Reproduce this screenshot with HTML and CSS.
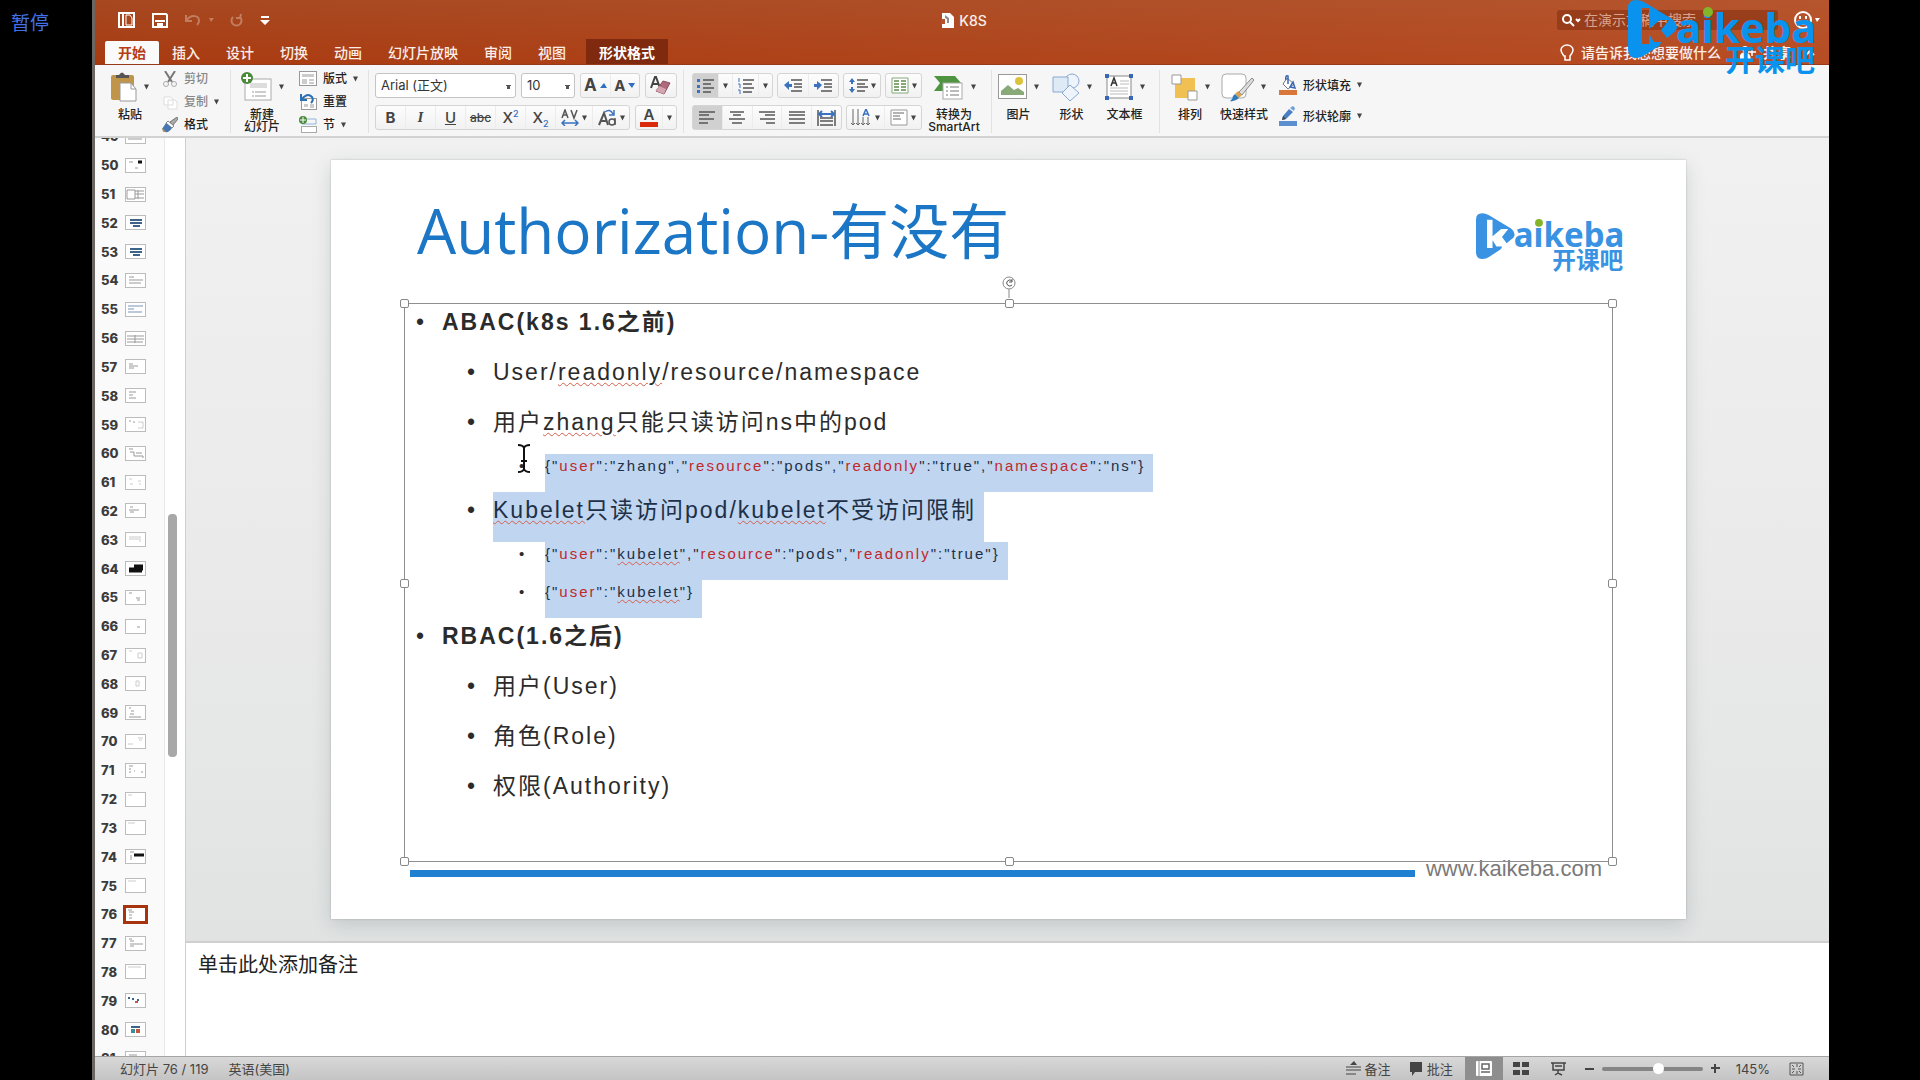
FILE: index.html
```
<!DOCTYPE html>
<html lang="zh-CN">
<head>
<meta charset="utf-8">
<title>K8S</title>
<link rel="stylesheet" href="styles.css">
</head>
<body>
<svg class="defs" aria-hidden="true">
  <defs>
    <symbol id="logo" viewBox="0 0 188 74">
      <path d="M0 8Q0 0 8 0Q12 0 16 2L44 19Q49 23 49 28Q48 31 45 33L39 38L33 30L41 20H32L21 29V8H14V44H21V34L26 42H33Q33 44 31 46L17 55Q13 58 8 58Q0 58 0 49Z"/>
      <text class="logo-latin" x="48" y="43">aikeba</text>
      <circle class="logo-dot" cx="80" cy="12" r="5"/>
      <text class="logo-cjk" x="97" y="71">开课吧</text>
    </symbol>
    <symbol id="car" viewBox="0 0 6 6"><path d="M0 0h6L3 6z"/></symbol>
  </defs>
</svg>
<aside class="gutter">暂停</aside>
<div class="app">
  <header class="titlebar">
    <div class="top-row">
      <div class="quick">
        <button aria-label="新建"><svg width="18" height="16" viewBox="0 0 18 16"><path d="M1 1h15v14H1z" fill="none" stroke="#fff" stroke-width="2"/><path d="M5 1v14" stroke="#fff" stroke-width="2"/><path d="M8 3h4l2 3v7H8z" fill="none" stroke="#fff"/></svg></button>
        <button aria-label="保存"><svg width="16" height="15" viewBox="0 0 16 15"><path d="M1 1h13l1 1v12H1z" fill="none" stroke="#fff" stroke-width="2"/><path d="M3 7h10v2H3zM5 10h6v5H5z" fill="#fff"/></svg></button>
        <button class="faded" aria-label="撤销"><svg width="30" height="14" viewBox="0 0 30 14"><path d="M2 2v6h6M2 8C7 1 15 2 15 8q0 2-2 4" fill="none" stroke="#fff" stroke-width="2"/><path d="M25 5h5l-3 4z" fill="#fff"/></svg></button>
        <button class="faded" aria-label="重做"><svg width="14" height="14" viewBox="0 0 14 14"><path d="M3 4a5 5 0 1 0 7 0M11 1l-1 4H6" fill="none" stroke="#fff" stroke-width="2"/></svg></button>
        <button aria-label="自定义工具栏"><svg width="10" height="9" viewBox="0 0 10 9"><path d="M1 0h8v2H1zM0 4h10L5 9z" fill="#fff"/></svg></button>
      </div>
      <h1 class="doc"><svg width="13" height="15" viewBox="0 0 13 15"><path d="M1 0h8l4 4v11H1z" fill="#fff"/><path d="M0 6h4v5H0z" fill="#b5512b"/><path d="M4 2l4 3v5H6V6L4 5z" fill="#8d8d8d"/></svg>K8S</h1>
      <div class="find">
        <label class="search"><svg width="19" height="13" viewBox="0 0 19 13"><circle cx="5" cy="5" r="4" fill="none" stroke="#fff" stroke-width="2"/><path d="M8 8l4 4M14 5l2 2 2-2" fill="none" stroke="#fff" stroke-width="2"/></svg><input type="text" aria-label="搜索" placeholder="在演示文稿中搜索"></label>
        <button aria-label="反馈"><svg width="26" height="18" viewBox="0 0 26 18"><circle cx="9" cy="9" r="8" fill="none" stroke="#fff" stroke-width="2"/><path d="M6 5v3M12 5v3M4 10q5 6 10 0" fill="none" stroke="#fff" stroke-width="2"/><path d="M21 7h5l-3 4z" fill="#fff"/></svg></button>
      </div>
    </div>
    <nav class="tabs">
      <a class="tab active" href="#home">开始</a><a class="tab" href="#insert">插入</a><a class="tab" href="#design">设计</a><a class="tab" href="#trans">切换</a><a class="tab" href="#anim">动画</a><a class="tab" href="#show">幻灯片放映</a><a class="tab" href="#review">审阅</a><a class="tab" href="#view">视图</a><a class="tab context" href="#format">形状格式</a>
      <div class="help">
        <a class="tell" href="#tell"><svg width="14" height="18" viewBox="0 0 14 18"><path d="M4 12Q1 8 1 6a6 5 0 0 1 12 0q0 2-3 6v4H5v-4z" fill="none" stroke="#fff" stroke-width="1.5"/></svg>请告诉我您想要做什么</a>
        <a class="share" href="#share"><svg width="16" height="14" viewBox="0 0 16 14"><circle cx="5" cy="3" r="3" fill="#fff"/><path d="M0 14q0-7 5-7t5 7zM12 2v8M8 6h8" fill="#fff" stroke="#fff" stroke-width="1.5"/></svg>共享</a>
        <button aria-label="折叠功能区"><svg width="9" height="6" viewBox="0 0 9 6"><path d="M0 5l4-4 4 4" fill="none" stroke="#fff" stroke-width="2"/></svg></button>
      </div>
    </nav>
    <svg class="watermark" role="img" aria-label="开课吧"><use href="#logo"/></svg>
  </header>

  <div class="ribbon">
    <button class="big w52"><span><svg width="26" height="30" viewBox="0 0 26 30"><rect y="3" width="23" height="25" rx="2" fill="#c0954a"/><path d="M5 6V3h3q3-5 6 0h4v3z" fill="#555"/><path d="M9 11h11l5 6v12H9z" fill="#fff" stroke="#999"/><path d="M20 11v6h5" fill="none" stroke="#999"/></svg><svg class="car"><use href="#car"/></svg></span>粘贴</button>
    <div class="stack w74">
      <button class="dim"><svg width="16" height="16" viewBox="0 0 16 16"><path d="M3 0l7 11M13 0L6 11" stroke="#777" stroke-width="2"/><circle cx="4" cy="13" r="2.500" fill="none" stroke="#aaa"/><circle cx="12" cy="13" r="2.500" fill="none" stroke="#aaa"/></svg>剪切</button>
      <button class="dim"><svg width="16" height="16" viewBox="0 0 16 16"><path d="M2 3h7l2 2v6H2zM6 6h7l2 2v7H6z" fill="#fff" stroke="#ddd"/></svg>复制<svg class="car"><use href="#car"/></svg></button>
      <button><svg width="16" height="16" viewBox="0 0 16 16"><path d="M15 0l1 2-5 6-3-3z" fill="#aaa" stroke="#777"/><path d="M6 4l6 5-2 2-6-5z" fill="#fff" stroke="#888"/><path d="M4 6l6 5q-3 5-7 4l-3-3z" fill="#4876b0"/><path d="M0 11l4 4h-3z" fill="#c89655"/></svg>格式</button>
    </div>
    <i class="rule"></i>
    <button class="big w62"><span><svg width="31" height="30" viewBox="0 0 31 30"><rect x="4" y="7" width="26" height="21" fill="#fff" stroke="#aaa"/><path d="M9 11h17v5H9z" fill="#ddd"/><path d="M11 20h14M11 24h14" stroke="#999" stroke-dasharray="2 1 20"/><circle cx="6" cy="6" r="6" fill="#4a8a3b"/><path d="M6 2v8M2 6h8" stroke="#fff" stroke-width="2"/></svg><svg class="car"><use href="#car"/></svg></span>新建<br>幻灯片</button>
    <div class="stack w75">
      <button><svg width="18" height="16" viewBox="0 0 18 16"><rect x=".5" y=".5" width="17" height="14" fill="#fff" stroke="#999"/><path d="M3 3h12v3H3zM3 8h5v5H3z" fill="#ccc"/><path d="M10 9h5M10 12h5" stroke="#999"/></svg>版式<svg class="car"><use href="#car"/></svg></button>
      <button><svg width="18" height="17" viewBox="0 0 18 17"><rect x="2.500" y="5.500" width="15" height="11" fill="#fff" stroke="#999"/><path d="M5 11h4v3H5z" fill="#ccc"/><path d="M11 12h4M11 14h4" stroke="#999"/><path d="M2 1v6h6M2 7Q8-1 13 4q2 3-1 6" fill="none" stroke="#2b6fb5" stroke-width="2"/></svg>重置</button>
      <button><svg width="18" height="17" viewBox="0 0 18 17"><path d="M8 3h9v5H3" fill="none" stroke="#8fb3dc"/><rect x="2.500" y="10.500" width="15" height="6" fill="#fff" stroke="#aaa"/><circle cx="4" cy="4" r="4" fill="#4a8a3b"/><path d="M4 1v6M1 4h6" stroke="#fff"/></svg>节<svg class="car"><use href="#car"/></svg></button>
    </div>
    <i class="rule"></i>
    <div class="block font-block">
      <div class="line">
        <select class="w141" aria-label="字体"><option>Arial (正文)</option></select>
        <select class="w54" aria-label="字号"><option>10</option></select>
        <div class="seg w60">
          <button aria-label="增大字号"><b class="lg">A</b><svg width="7" height="5" viewBox="0 0 7 5"><path d="M0 5h7L4 0z" fill="#2f6fc0"/></svg></button>
          <button aria-label="减小字号"><b>A</b><svg width="7" height="5" viewBox="0 0 7 5"><path d="M0 0h7L4 5z" fill="#2f6fc0"/></svg></button>
        </div>
        <div class="seg w32"><button aria-label="清除格式"><svg width="22" height="20" viewBox="0 0 22 20"><path d="M1 12L5 1h1l4 11M3 8h5" fill="none" stroke="#444" stroke-width="2"/><path d="M13 5l7 2-6 11-8-3z" fill="#b06a7c" stroke="#8b4f60"/><path d="M6 15l3-5 7 3-2 5z" fill="#d3a5b0"/></svg></button></div>
      </div>
      <div class="line">
        <div class="seg w255">
          <button><b>B</b></button><button><i class="it">I</i></button><button><u>U</u></button><button><s>abc</s></button><button><span>X<sup>2</sup></span></button><button><span>X<sub>2</sub></span></button>
          <button class="wide" aria-label="字符间距"><svg width="18" height="17" viewBox="0 0 18 17"><path d="M1 9l3-8 3 8M2 6h4M10 1l3 8 3-8" fill="none" stroke="#555" stroke-width="1.500"/><path d="M1 14h16M4 11l-3 3 3 3M14 11l3 3-3 3" fill="none" stroke="#3a72c0" stroke-width="1.500"/></svg><svg class="car"><use href="#car"/></svg></button>
          <button class="wide" aria-label="更改大小写"><svg width="19" height="17" viewBox="0 0 19 17"><path d="M1 16L6 4l4 12M3 12h6" fill="none" stroke="#555" stroke-width="2"/><circle cx="14" cy="13" r="3" fill="none" stroke="#555" stroke-width="1.500"/><path d="M17 9v7" stroke="#555" stroke-width="1.500"/><path d="M7 3q5-4 8 2M16 1v5h-5" fill="none" stroke="#3a72c0" stroke-width="1.500"/></svg><svg class="car"><use href="#car"/></svg></button>
        </div>
        <div class="seg w42"><button aria-label="字体颜色"><span class="fc">A</span></button><button class="slim" aria-label="更多颜色"><svg class="car"><use href="#car"/></svg></button></div>
      </div>
    </div>
    <i class="rule"></i>
    <div class="block para-block">
      <div class="line">
        <div class="seg w81">
          <button class="on" aria-label="项目符号"><svg width="17" height="16" viewBox="0 0 17 16"><path d="M6 2h11M6 6h8M6 10h11M6 14h8" stroke="#555" stroke-width="1.500"/><path d="M0 1h3v3H0zM0 7h3v3H0zM0 12h3v3H0z" fill="#3a72c0"/></svg></button><button class="slim" aria-label="更多项目符号"><svg class="car"><use href="#car"/></svg></button>
          <button aria-label="编号"><svg width="17" height="16" viewBox="0 0 17 16"><path d="M6 2h11M6 6h9M6 10h11M6 14h9" stroke="#555" stroke-width="1.500"/><path d="M2 0v4M1 6h2v4M1 12h2v4" fill="none" stroke="#3a72c0"/></svg></button><button class="slim" aria-label="更多编号"><svg class="car"><use href="#car"/></svg></button>
        </div>
        <div class="seg w62b">
          <button aria-label="减少缩进"><svg width="18" height="13" viewBox="0 0 18 13"><path d="M7 1h11M10 5h8M10 8h8M7 12h11" stroke="#555" stroke-width="1.500"/><path d="M5 2v3h3v3H5v3L0 6z" fill="#3a72c0"/></svg></button>
          <button aria-label="增加缩进"><svg width="18" height="13" viewBox="0 0 18 13"><path d="M7 1h11M10 5h8M10 8h8M7 12h11" stroke="#555" stroke-width="1.500"/><path d="M3 2v3H0v3h3v3l5-5z" fill="#3a72c0"/></svg></button>
        </div>
        <div class="seg w38"><button aria-label="行距"><svg width="19" height="15" viewBox="0 0 19 15"><path d="M8 2h11M8 6h8M8 9h11M8 13h8" stroke="#555" stroke-width="1.500"/><path d="M3 0l3 4H4v2H2V4H0zM3 15l3-4H4V9H2v2H0z" fill="#3a72c0"/></svg><svg class="car"><use href="#car"/></svg></button></div>
        <div class="seg w37"><button aria-label="分栏"><svg width="18" height="17" viewBox="0 0 18 17"><path d="M1 1h16v15H1z" fill="#fff" stroke="#86a878"/><path d="M3 4h5M3 7h5M3 10h5M3 13h5M10 4h5M10 7h5M10 10h5M10 13h5" stroke="#86a878" stroke-width="2"/></svg><svg class="car"><use href="#car"/></svg></button></div>
      </div>
      <div class="line">
        <div class="seg w150">
          <button class="on" aria-label="左对齐"><svg width="16" height="13" viewBox="0 0 16 13"><path d="M0 1h16M0 4h10M0 8h15M0 12h9" stroke="#555" stroke-width="1.500"/></svg></button>
          <button aria-label="居中"><svg width="16" height="13" viewBox="0 0 16 13"><path d="M1 1h14M4 4h8M0 8h16M3 12h10" stroke="#555" stroke-width="1.500"/></svg></button>
          <button aria-label="右对齐"><svg width="16" height="13" viewBox="0 0 16 13"><path d="M0 1h16M6 4h10M1 8h15M7 12h9" stroke="#555" stroke-width="1.500"/></svg></button>
          <button aria-label="两端对齐"><svg width="16" height="13" viewBox="0 0 16 13"><path d="M0 1h16M0 4h16M0 8h16M0 12h16" stroke="#555" stroke-width="1.500"/></svg></button>
          <button aria-label="分散对齐"><svg width="19" height="16" viewBox="0 0 19 16"><path d="M1 0v16M18 0v16M3 8h13M3 11h13M3 15h13" stroke="#555" stroke-width="1.500"/><path d="M2 4h15M5 1L2 4l3 3M14 1l3 3-3 3" stroke="#3a72c0" fill="none" stroke-width="2"/></svg></button>
        </div>
        <div class="seg w76">
          <button aria-label="文字方向"><svg width="21" height="17" viewBox="0 0 21 17"><path d="M2 0v16M7 0v16M12 8v8M17 8v8M0 14l2 2 2-2M5 14l2 2 2-2M10 14l2 2 2-2M15 14l2 2 2-2" fill="none" stroke="#666"/><path d="M12 7l3-7 3 7M13 5h4" fill="none" stroke="#3a72c0" stroke-width="1.500"/></svg><svg class="car"><use href="#car"/></svg></button>
          <button aria-label="对齐文本"><svg width="18" height="17" viewBox="0 0 18 17"><path d="M1 1h16v15H1z" fill="#fff" stroke="#999"/><path d="M3 4h11M3 7h7M3 10h8" stroke="#666"/></svg><svg class="car"><use href="#car"/></svg></button>
        </div>
      </div>
    </div>
    <button class="big w52 smart"><span><svg width="31" height="26" viewBox="0 0 31 26"><path d="M1 2h21l6 7-5 8H1l6-8z" fill="#4f9441"/><rect x="10" y="9" width="19" height="16" fill="#fff" stroke="#aaa"/><path d="M13 13h2M17 13h9M13 17h2M17 17h9M13 21h2M17 21h9" stroke="#777"/></svg><svg class="car"><use href="#car"/></svg></span>转换为<br>SmartArt</button>
    <i class="rule"></i>
    <button class="big w53"><span><svg width="29" height="26" viewBox="0 0 29 26"><rect x=".5" y=".5" width="28" height="24" fill="#fff" stroke="#999"/><path d="M3 21v-4l7-6 6 5 4-2 6 4v3z" fill="#8aa978"/><circle cx="21" cy="7" r="4" fill="#ddc33c"/></svg><svg class="car"><use href="#car"/></svg></span>图片</button>
    <button class="big w53"><span><svg width="28" height="29" viewBox="0 0 28 29"><circle cx="20" cy="8" r="7" fill="#eef4fb" stroke="#8aa9d2"/><path d="M1 4h15v15H1z" fill="#dfeaf7" stroke="#8aa9d2"/><path d="M18 12l9 8-9 8-8-8z" fill="#eef4fb" stroke="#8aa9d2"/></svg><svg class="car"><use href="#car"/></svg></span>形状</button>
    <button class="big w53"><span><svg width="28" height="26" viewBox="0 0 28 26"><path d="M2 2h24v22H2z" fill="#fff" stroke="#888"/><path d="M15 7h9M15 10h9M5 14h18M5 17h18M5 20h18" stroke="#bbb"/><path d="M6 12l3-8 3 8M7 9h4" fill="none" stroke="#333" stroke-width="1.500"/><path d="M0 0h4v4H0zM24 0h4v4h-4zM0 22h4v4H0zM24 22h4v4h-4z" fill="#3a66b5"/></svg><svg class="car"><use href="#car"/></svg></span>文本框</button>
    <i class="rule gap"></i>
    <button class="big w60"><span><svg width="27" height="27" viewBox="0 0 27 27"><path d="M4 4h20v20H4z" fill="#f0c052"/><path d="M1 1h9v9H1zM17 17h9v9h-9z" fill="#fff" stroke="#999"/></svg><svg class="car"><use href="#car"/></svg></span>排列</button>
    <button class="big w46"><span><svg width="33" height="29" viewBox="0 0 33 29"><rect x="1" y="1" width="24" height="24" rx="4" fill="#fff" stroke="#aaa"/><path d="M31 5l2 2-12 15-3-3z" fill="#ddd" stroke="#888"/><path d="M17 18l4 4-3 3-4-4z" fill="#d9a44e"/><path d="M14 21l4 4q-4 4-9 3 3-2 3-5z" fill="#2f79bd"/></svg><svg class="car"><use href="#car"/></svg></span>快速样式</button>
    <div class="stack shape">
      <button><svg width="18" height="20" viewBox="0 0 18 20"><path d="M8 3l7 6-6 5-5-5z" fill="#fff" stroke="#777"/><path d="M9 9V1Q6 0 7 5M14 7l2 6-5-1z" fill="none" stroke="#3a66b5" stroke-width="1.500"/><path d="M0 15h18v5H0z" fill="#d9773a"/></svg>形状填充<svg class="car"><use href="#car"/></svg></button>
      <button><svg width="18" height="20" viewBox="0 0 18 20"><path d="M11 2l3-2 2 2-1 3z" fill="#6fa0d8"/><path d="M10 3l4 3-7 7-4 1 1-4z" fill="#4b7fc4"/><path d="M4 10l3 3-4 1z" fill="#444"/><path d="M0 15h18v5H0z" fill="#5b8fd0"/></svg>形状轮廓<svg class="car"><use href="#car"/></svg></button>
    </div>
  </div>

  <div class="work">
    <nav class="pane" aria-label="幻灯片">
      <ul class="thumbs">
        <li><a href="#s49">49<svg viewBox="0 0 21 15"><path d="M3 10h14"/></svg></a></li>
        <li><a href="#s50">50<svg viewBox="0 0 21 15"><path d="M4 4h4M10 10h3"/><path class="k" d="M13 4h4"/></svg></a></li>
        <li><a href="#s51">51<svg viewBox="0 0 21 15"><path d="M2 3h8v9H2zM10 4h9M10 7h9M10 11h9M13 3v9"/></svg></a></li>
        <li><a href="#s52">52<svg viewBox="0 0 21 15"><path class="b" d="M5 5h12M5 8h12M8 11h7"/></svg></a></li>
        <li><a href="#s53">53<svg viewBox="0 0 21 15"><path class="b" d="M5 5h12M5 8h12M8 11h7"/></svg></a></li>
        <li><a href="#s54">54<svg viewBox="0 0 21 15"><path d="M4 4h5M4 7h14M4 10h12"/></svg></a></li>
        <li><a href="#s55">55<svg viewBox="0 0 21 15"><path class="l" d="M3 4h15M3 7h6M3 10h14"/></svg></a></li>
        <li><a href="#s56">56<svg viewBox="0 0 21 15"><path d="M2 5h17M2 8h17M2 11h16M10 4v8"/></svg></a></li>
        <li><a href="#s57">57<svg viewBox="0 0 21 15"><path d="M4 5h4M4 7h9M4 9h5"/></svg></a></li>
        <li><a href="#s58">58<svg viewBox="0 0 21 15"><path d="M4 4h7M4 7h4M4 10h7"/></svg></a></li>
        <li><a href="#s59">59<svg viewBox="0 0 21 15"><path d="M4 4h2M8 5h2"/><path class="f" d="M13 5h5v6h-5"/></svg></a></li>
        <li><a href="#s60">60<svg viewBox="0 0 21 15"><path d="M4 3h4M5 6h4v4h9v2M11 7h6"/></svg></a></li>
        <li><a href="#s61">61<svg viewBox="0 0 21 15"><path class="f" d="M4 4h3M5 9h3M13 6h3M14 9h2"/></svg></a></li>
        <li><a href="#s62">62<svg viewBox="0 0 21 15"><path d="M5 4h3M4 7h10M5 9h4"/></svg></a></li>
        <li><a href="#s63">63<svg viewBox="0 0 21 15"><path class="f" d="M4 5h12M4 7h12M14 9h2"/></svg></a></li>
        <li><a href="#s64">64<svg viewBox="0 0 21 15"><path class="k" d="M9 5h9M4 8h14M4 10h13"/></svg></a></li>
        <li><a href="#s65">65<svg viewBox="0 0 21 15"><path d="M4 3h3M11 8h4M12 10h3"/></svg></a></li>
        <li><a href="#s66">66<svg viewBox="0 0 21 15"><path d="M12 8h3"/></svg></a></li>
        <li><a href="#s67">67<svg viewBox="0 0 21 15"><path class="f" d="M13 5h4v5h-4zM4 3h3"/></svg></a></li>
        <li><a href="#s68">68<svg viewBox="0 0 21 15"><path class="f" d="M11 5h3v5h-3z"/></svg></a></li>
        <li><a href="#s69">69<svg viewBox="0 0 21 15"><path d="M4 3h2M6 6h3M5 9h4M4 12h12"/></svg></a></li>
        <li><a href="#s70">70<svg viewBox="0 0 21 15"><path class="f" d="M3 10h5M13 4h5M14 6h3"/></svg></a></li>
        <li><a href="#s71">71<svg viewBox="0 0 21 15"><path d="M4 3h4M4 6h2M4 9h2M9 8h1M16 9h2"/></svg></a></li>
        <li><a href="#s72">72<svg viewBox="0 0 21 15"><path class="f" d="M3 3h4"/></svg></a></li>
        <li><a href="#s73">73<svg viewBox="0 0 21 15"><path class="f" d="M3 3h7"/></svg></a></li>
        <li><a href="#s74">74<svg viewBox="0 0 21 15"><path d="M5 3h4M6 6v5"/><path class="k" d="M9 6h10"/></svg></a></li>
        <li><a href="#s75">75<svg viewBox="0 0 21 15"><path class="f" d="M3 3h8"/></svg></a></li>
        <li class="current"><a href="#s76">76<svg viewBox="0 0 21 15"><path d="M3 3h4M4 5h5M4 8h3M4 11h3"/></svg></a></li>
        <li><a href="#s77">77<svg viewBox="0 0 21 15"><path d="M4 3h3M5 5h4M5 8h13M5 10h4"/></svg></a></li>
        <li><a href="#s78">78<svg viewBox="0 0 21 15"><path class="f" d="M3 3h13"/></svg></a></li>
        <li><a href="#s79">79<svg viewBox="0 0 21 15"><path class="b" d="M3 5h2M7 6h2M12 7h2"/><path class="o" d="M10 9h3"/></svg></a></li>
        <li><a href="#s80">80<svg viewBox="0 0 21 15"><path class="b" d="M6 5h9"/><path class="t" d="M6 8h4M6 10h4"/><path class="o" d="M11 8h4M11 10h4"/></svg></a></li>
        <li><a href="#s81">81<svg viewBox="0 0 21 15"><path d="M4 4h8"/></svg></a></li>
      </ul>
      <div class="track"><div class="thumb"></div></div>
    </nav>
    <main class="editor">
      <div class="canvas">
        <article class="slide">
          <div class="slide-head">
            <h2>Authorization-<span>有没有</span></h2>
            <svg class="slide-logo" role="img" aria-label="开课吧"><use href="#logo"/></svg>
          </div>
          <div class="textbox">
            <ul class="outline">
              <li class="l1"><span>ABAC(k8s 1.6之前)</span></li>
              <li class="l2"><span>User/<u>readonly</u>/resource/namespace</span></li>
              <li class="l2"><span>用户<u>zhang</u>只能只读访问ns中的pod</span></li>
              <li class="l3 sel"><span>{"<em>user</em>":"zhang","<em>resource</em>":"pods","<em>readonly</em>":"true","<em>namespace</em>":"ns"}</span><svg class="ibeam" viewBox="0 0 14 29"><path d="M1 1q5 0 6 3v21q-1 3-6 3M13 1q-5 0-6 3M13 28q-5 0-6-3M4 17h6" fill="none" stroke="#111" stroke-width="2"/></svg></li>
              <li class="l2 sel"><span><u>Kubelet</u>只读访问pod/<u>kubelet</u>不受访问限制</span></li>
              <li class="l3 sel"><span>{"<em>user</em>":"<u>kubelet</u>","<em>resource</em>":"pods","<em>readonly</em>":"true"}</span></li>
              <li class="l3 sel"><span>{"<em>user</em>":"<u>kubelet</u>"}</span></li>
              <li class="l1"><span>RBAC(1.6之后)</span></li>
              <li class="l2"><span>用户(User)</span></li>
              <li class="l2"><span>角色(Role)</span></li>
              <li class="l2"><span>权限(Authority)</span></li>
            </ul>
            <i class="h tl"></i><i class="h tc"></i><i class="h tr"></i><i class="h ml"></i><i class="h mr"></i><i class="h bl"></i><i class="h bc"></i><i class="h br"></i>
            <svg class="rotate" viewBox="0 0 14 22"><circle cx="7" cy="7" r="6" fill="#fff" stroke="#888"/><path d="M10 5a3 3 0 1 0 0 4M10 3v3H7" fill="none" stroke="#555"/><path d="M7 13v9" stroke="#888"/></svg>
          </div>
          <footer class="slide-foot"><i></i><span>www.kaikeba.com</span></footer>
        </article>
      </div>
      <textarea class="notes" aria-label="备注">单击此处添加备注</textarea>
    </main>
  </div>

  <footer class="status">
    <span class="count">幻灯片 76 / 119</span><span class="lang">英语(美国)</span>
    <button class="st-note"><svg width="15" height="15" viewBox="0 0 15 15"><path d="M4 4l4-4 3 4z" fill="#444"/><path d="M0 6h15M0 9h15M0 13h10" stroke="#444"/></svg>备注</button>
    <button class="st-com"><svg width="14" height="14" viewBox="0 0 14 14"><path d="M1 0h12v10H6l-3 4v-4H1z" fill="#444"/></svg>批注</button>
    <button class="view on" aria-label="普通视图"><svg width="16" height="15" viewBox="0 0 16 15"><rect width="16" height="15" rx="1" fill="#fff"/><path d="M3 0v15" stroke="#888"/><path d="M6 3h7v5H6zM5 11h9" fill="none" stroke="#666" stroke-width="1.500"/></svg></button>
    <button class="view" aria-label="浏览视图"><svg width="16" height="13" viewBox="0 0 16 13"><path d="M0 0h7v5H0zM9 0h7v5H9zM0 8h7v5H0zM9 8h7v5H9z" fill="#444"/></svg></button>
    <button class="view last" aria-label="放映"><svg width="15" height="14" viewBox="0 0 15 14"><path d="M0 1h15M2 1v7h11V1M4 4h7M7 8v3M4 13l3-2 4 2" fill="none" stroke="#444" stroke-width="1.500"/></svg></button>
    <button class="step" aria-label="缩小"><svg width="9" height="9" viewBox="0 0 9 9"><path d="M0 5h9" stroke="#444" stroke-width="2"/></svg></button>
    <input type="range" aria-label="缩放" min="0" max="100" value="57">
    <button class="step" aria-label="放大"><svg width="9" height="9" viewBox="0 0 9 9"><path d="M0 4h9M4 0v9" stroke="#444" stroke-width="2"/></svg></button>
    <span class="pct">145%</span>
    <button class="fit" aria-label="适应窗口"><svg width="15" height="14" viewBox="0 0 15 14"><path d="M1 1h13v12H1z" fill="none" stroke="#555"/><path d="M8 2v3M8 9v3M3 7h3M9 7h3M3 3l2 2M12 3l-2 2M3 11l2-2M12 11l-2-2" stroke="#555"/></svg></button>
  </footer>
</div>
</body>
</html>
```
FILE: styles.css
```
* { box-sizing: border-box; }
body {
  margin: 0; height: 100vh; display: flex; background: #000; color: #222;
  font-family: Inter, "Noto Sans CJK SC", sans-serif; font-size: 13px;
}
button, input, select, textarea { font: inherit; color: inherit; }
button { background: none; border: 0; padding: 0; display: flex; align-items: center; justify-content: center; white-space: nowrap; }
a { color: inherit; text-decoration: none; }
ul { list-style: none; margin: 0; padding: 0; }
svg { display: block; flex: none; }
.defs { position: absolute; width: 0; height: 0; }

.gutter { flex: 0 0 92px; padding: 11px 0 0 11px; color: #4470e8; font: 19px/22px "Noto Sans CJK SC", sans-serif; }
.app { flex: 1; min-width: 0; margin-right: 91px; border-left: 3px solid #6a6664; display: flex; flex-direction: column; background: #fff; }

.titlebar {
  position: relative; flex: none; color: #fbeee8; border-bottom: 1px solid #983a1a;
  background: linear-gradient(90deg, rgba(200,100,60,0), rgba(210,110,70,.35)), linear-gradient(#a64821, #a93a10);
}
.top-row { display: grid; grid-template-columns: 1fr auto 1fr; align-items: center; height: 41px; padding-bottom: 1px; }
.quick { display: flex; align-items: center; padding-left: 23px; gap: 16px; }
.quick .faded { opacity: .3; }
.doc { margin: 0; display: flex; gap: 5px; align-items: center; font-size: 14px; font-weight: 500; padding-left: 4px; }
.find { display: flex; justify-content: flex-end; align-items: center; padding-right: 9px; gap: 16px; }
.search { display: flex; align-items: center; gap: 3px; width: 221px; height: 20px; padding-left: 5px; background: rgba(100,25,0,.35); border-radius: 3px; }
.search input { flex: 1; min-width: 0; border: 0; background: none; padding: 0; font-size: 14px; line-height: 20px; }
.search input::placeholder { color: #d9a48d; opacity: 1; }
.tabs { display: flex; height: 23px; padding-left: 10px; font-size: 14px; line-height: 23px; font-weight: 500; }
.tab { padding: 0 13px; }
.tab.active { background: #fafafa; color: #b53c14; border-radius: 2px 2px 0 0; font-weight: 700; }
.tab.context { background: #7f2a0f; color: #fff; font-weight: 700; margin: -2px 0 0 7px; line-height: 27px; }
.help { margin-left: auto; display: flex; align-items: center; padding-right: 14px; }
.tell, .share { display: flex; align-items: center; gap: 7px; }
.share { margin: 0 15px 0 19px; font-weight: 700; }
.watermark { position: absolute; right: 13px; top: 0; width: 188px; height: 74px; fill: #0a93ee; z-index: 2; }
.logo-latin { font: 700 42px "Noto Sans", sans-serif; }
.logo-cjk { font: 700 30px "Noto Sans CJK SC", sans-serif; }
.logo-dot { fill: #84b528; }

.ribbon { flex: none; display: flex; height: 73px; padding: 5px 0 3px 9px; background: #f6f6f6; border-bottom: 2px solid #d2d2d2; font-size: 12px; line-height: 13px; font-weight: 500; overflow: hidden; }
.car { width: 5px; height: 6px; fill: #444; }
.big { flex: none; display: block; align-self: flex-start; line-height: 12px; text-align: center; }
.big > span { display: flex; align-items: center; justify-content: center; gap: 7px; height: 34px; margin-bottom: 5px; }
.stack { flex: none; display: flex; flex-direction: column; justify-content: space-between; align-items: flex-start; padding-left: 6px; }
.stack button { height: 17px; gap: 6px; }
.stack .dim { color: #888; }
.stack.shape { padding: 4px 0 6px 13px; }
.stack.shape button { height: 22px; }
.rule { flex: none; width: 1px; background: #e2e2e2; }
.rule.gap { margin-left: 8px; }
.block { flex: none; display: flex; flex-direction: column; gap: 7px; padding: 3px 6px; }
.line { display: flex; justify-content: space-between; height: 25px; }
.font-block { width: 314px; }
.para-block { width: 244px; padding: 3px 6px 3px 8px; }
.line select {
  appearance: none; border: 1px solid #c4c4c4; border-radius: 3px; padding: 0 5px; font-weight: 400; font-size: 13px; color: #333;
  background: linear-gradient(#555, #555) right 4px center / 5px 1px no-repeat,
    linear-gradient(#555, #555) right 5px top 12px / 3px 3px no-repeat, #fff;
}
.seg { display: flex; border: 1px solid #d5d5d5; border-radius: 3px; background: linear-gradient(#fdfdfd, #f1f1f1); }
.seg button { flex: 1 1 0; gap: 3px; font-size: 15px; color: #444; border-left: 1px solid #ececec; }
.seg button:first-child { border-left: 0; }
.seg .slim { flex: 0 0 14px; }
.seg .wide { flex: 0 0 37px; }
.seg .on { background: #d0d0d0; }
.seg .lg { font-size: 17px; }
.seg s { font-size: 12px; }
.seg sup, .seg sub { font-size: 9px; color: #2f6fc0; line-height: 0; }
.it { font-family: "Liberation Serif", serif; font-weight: 700; }
.fc { border-bottom: 5px solid #d92a0c; line-height: 14px; width: 18px; font-weight: 600; }
.w32 { width: 32px; } .w37 { width: 37px; } .w38 { width: 38px; } .w42 { width: 42px; }
.w46 { width: 46px; } .w52 { width: 52px; } .w53 { width: 53px; }
.w54 { width: 54px; } .w60 { width: 60px; } .w62 { width: 62px; } .w62b { width: 62px; }
.w74 { width: 74px; } .w75 { width: 75px; } .w76 { width: 76px; } .w81 { width: 81px; }
.w141 { width: 141px; } .w150 { width: 150px; } .w255 { width: 255px; }
.smart { margin-right: 11px; }

.work { flex: 1; min-height: 0; display: flex; }
.pane { flex: 0 0 91px; display: flex; overflow: hidden; background: #fafafa; border-right: 1px solid #cfcfcf; }
.thumbs { flex: 1; display: flex; flex-direction: column; margin: -16px 0 -17px; }
.thumbs li { flex: 1 1 0; min-height: 0; display: flex; align-items: center; }
.thumbs a { display: flex; align-items: center; padding-left: 6px; font-size: 13px; font-weight: 800; color: #3c3c3c; width: 100%; }
.thumbs svg { width: 21px; height: 15px; margin: 0 18px 0 auto; background: #fff; outline: 1px solid #bcbcbc; outline-offset: -1px; stroke: #999; fill: none; }
.thumbs .current svg { outline: 3px solid #a6340f; outline-offset: -1px; }
.thumbs .k { stroke: #111; stroke-width: 3; } .thumbs .b { stroke: #3d6488; stroke-width: 2; }
.thumbs .l { stroke: #7b93b5; } .thumbs .f { stroke: #ccc; }
.thumbs .o { stroke: #c4583f; stroke-width: 2; } .thumbs .t { stroke: #3b8f99; stroke-width: 2; }
.track { width: 21px; padding-left: 3px; background: #fff; border-left: 1px solid #e8e8e8; }
.thumb { width: 9px; height: 243px; margin-top: 376px; border-radius: 4px; background: #a8a8a8; }

.editor { flex: 1; min-width: 0; display: flex; flex-direction: column; }
.canvas { flex: 1; min-height: 0; padding: 22px 143px 22px 145px; background: linear-gradient(#f1f1f1, #e9e9e9 60%, #e1e3e3); border-bottom: 2px solid #cfcfcf; }
.slide { height: 100%; display: flex; flex-direction: column; background: #fff; box-shadow: 0 6px 18px rgba(60,80,80,.18), 0 0 2px rgba(0,0,0,.2); }
.slide-head { display: flex; justify-content: space-between; height: 143px; padding: 30px 62px 0 86px; }
.slide-head h2 { margin: 0; font: 400 62px/80px "Open Sans", "Noto Sans CJK SC", sans-serif; color: #1b76c6; white-space: nowrap; }
.slide-head h2 span { font-size: 60px; }
.slide-logo { width: 148px; height: 59px; margin-top: 23px; fill: #3a92e2; }
.slide-logo .logo-dot { fill: #8fa63c; }
.textbox { position: relative; flex: 1; margin: 0 73px; border: 1px solid #8f8f8f; }
.outline { font: 23px/36px "Liberation Sans", "Noto Sans CJK SC", sans-serif; letter-spacing: 2px; color: #2b2b2b; }
.outline li { position: relative; display: flex; white-space: nowrap; }
.outline li::before { content: "•"; letter-spacing: 0; flex: none; width: 26px; }
.outline span { padding-bottom: 14px; }
.outline .l1 { padding-left: 11px; } .outline .l1 span { font-weight: 700; }
.outline .l2 { padding-left: 62px; }
.outline .l3 { padding-left: 114px; font-size: 15px; line-height: 24px; }
.outline .sel span { background: #c0d5f0; color: #1d3047; padding-right: 8px; }
.outline em { font-style: normal; color: #c0282c; }
.outline u { text-decoration: underline wavy #d4604c 1px; text-underline-offset: 2px; }
.ibeam { position: absolute; left: 112px; top: -10px; width: 14px; height: 29px; }
.h { position: absolute; width: 9px; height: 9px; background: #fff; border: 1px solid #888; border-radius: 2px; }
.tl, .tc, .tr { top: -5px; } .bl, .bc, .br { bottom: -5px; }
.tl, .ml, .bl { left: -5px; } .tr, .mr, .br { right: -5px; }
.tc, .bc { left: calc(50% - 4px); } .ml, .mr { top: calc(50% - 4px); }
.rotate { position: absolute; left: calc(50% - 7px); top: -28px; width: 14px; height: 22px; }
.slide-foot { flex: none; display: flex; align-items: flex-start; gap: 11px; height: 57px; padding: 0 84px 0 79px; }
.slide-foot i { flex: 1; height: 7px; margin-top: 8px; background: #1f7fd0; }
.slide-foot span { margin-top: -5px; font: 22px/24px "Liberation Sans", sans-serif; color: #7a7a7a; }
.notes { flex: none; height: 113px; border: 0; resize: none; padding: 6px 12px; font: 20px/30px "Noto Sans CJK SC", sans-serif; color: #222; outline: 0; }

.status { flex: none; display: flex; align-items: center; height: 24px; padding: 0 25px; border-top: 1px solid #a5a5a5; background: linear-gradient(#d8d8d8, #c4c4c4); color: #444; font-size: 13px; }
.status button { gap: 4px; height: 100%; }
.lang { margin-left: 20px; }
.st-note { margin-left: auto; }
.st-com { margin: 0 12px 0 18px; }
.view { width: 38px; margin-right: 10px; }
.view + .view { width: 16px; margin-right: 22px; }
.view + .view.last { margin-right: 18px; }
.view.on { background: #8e8e8e; }
.step { width: 9px; }
.status input { appearance: none; width: 101px; height: 4px; margin: 0 8px; border-radius: 2px; background: #858585; }
.status input::-webkit-slider-thumb { appearance: none; width: 11px; height: 11px; border-radius: 50%; background: #fff; }
.pct { margin: 0 19px 0 16px; }
```
